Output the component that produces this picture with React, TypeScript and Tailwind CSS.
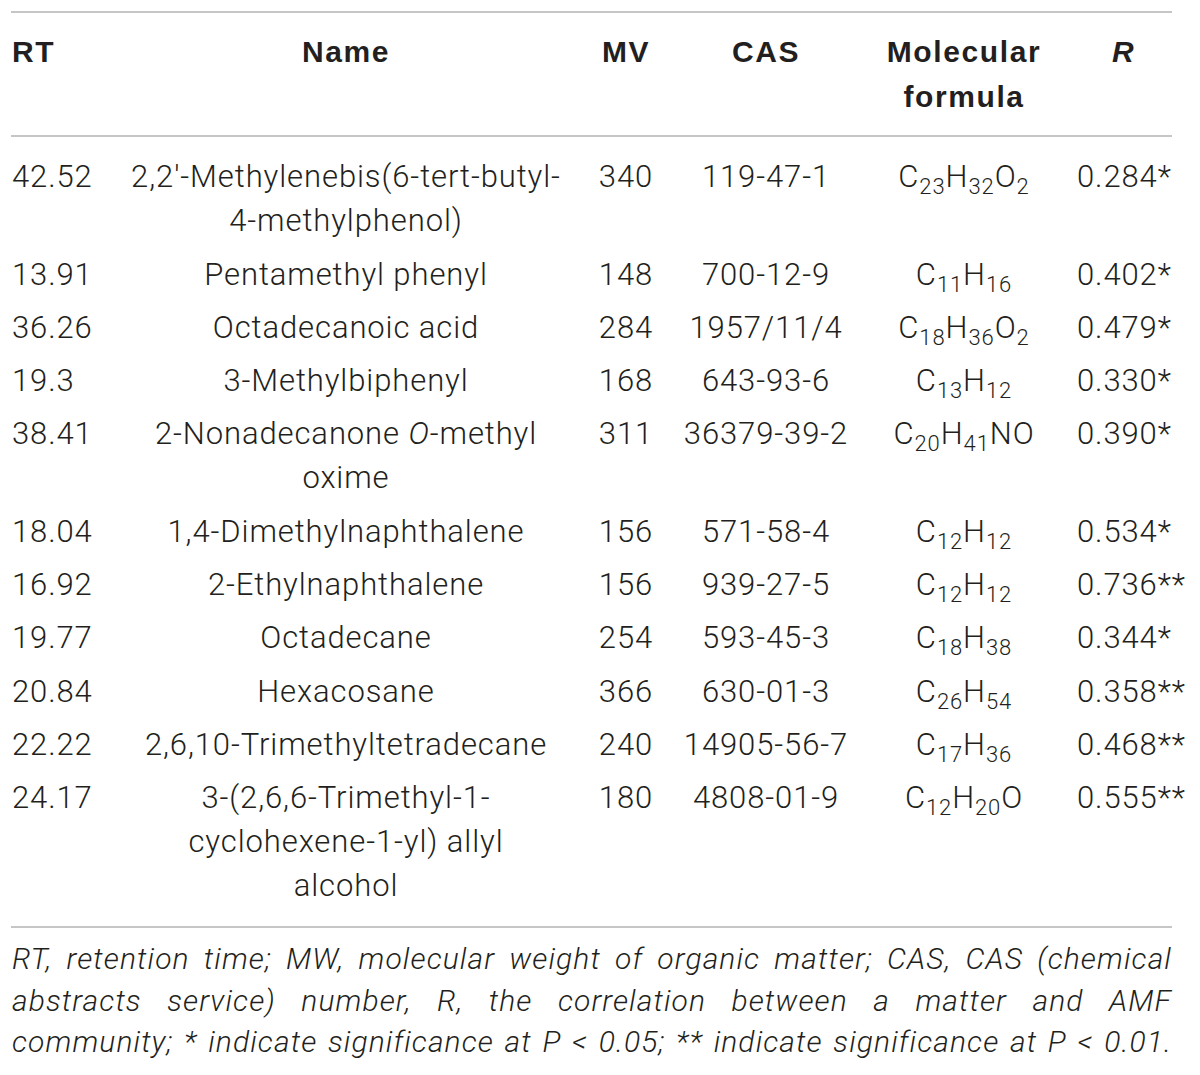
import React from "react";

type Row = {
  rt: string;
  name: React.ReactNode;
  mv: string;
  cas: string;
  formula: React.ReactNode;
  r: string;
};

const F = ({ parts }: { parts: [string, string?][] }) => (
  <span>
    {parts.map(([el, sub], i) => (
      <React.Fragment key={i}>
        {el}
        {sub && <sub className="text-[22px] relative top-[7px]">{sub}</sub>}
      </React.Fragment>
    ))}
  </span>
);

const ROWS: Row[] = [
  {
    rt: "42.52",
    name: (
      <>
        2,2′-Methylenebis(6-tert-butyl-
        <br />
        4-methylphenol)
      </>
    ),
    mv: "340",
    cas: "119-47-1",
    formula: <F parts={[["C", "23"], ["H", "32"], ["O", "2"]]} />,
    r: "0.284*",
  },
  { rt: "13.91", name: "Pentamethyl phenyl", mv: "148", cas: "700-12-9", formula: <F parts={[["C", "11"], ["H", "16"]]} />, r: "0.402*" },
  { rt: "36.26", name: "Octadecanoic acid", mv: "284", cas: "1957/11/4", formula: <F parts={[["C", "18"], ["H", "36"], ["O", "2"]]} />, r: "0.479*" },
  { rt: "19.3", name: "3-Methylbiphenyl", mv: "168", cas: "643-93-6", formula: <F parts={[["C", "13"], ["H", "12"]]} />, r: "0.330*" },
  {
    rt: "38.41",
    name: (
      <>
        2-Nonadecanone <i>O</i>-methyl
        <br />
        oxime
      </>
    ),
    mv: "311",
    cas: "36379-39-2",
    formula: <F parts={[["C", "20"], ["H", "41"], ["NO"]]} />,
    r: "0.390*",
  },
  { rt: "18.04", name: "1,4-Dimethylnaphthalene", mv: "156", cas: "571-58-4", formula: <F parts={[["C", "12"], ["H", "12"]]} />, r: "0.534*" },
  { rt: "16.92", name: "2-Ethylnaphthalene", mv: "156", cas: "939-27-5", formula: <F parts={[["C", "12"], ["H", "12"]]} />, r: "0.736**" },
  { rt: "19.77", name: "Octadecane", mv: "254", cas: "593-45-3", formula: <F parts={[["C", "18"], ["H", "38"]]} />, r: "0.344*" },
  { rt: "20.84", name: "Hexacosane", mv: "366", cas: "630-01-3", formula: <F parts={[["C", "26"], ["H", "54"]]} />, r: "0.358**" },
  { rt: "22.22", name: "2,6,10-Trimethyltetradecane", mv: "240", cas: "14905-56-7", formula: <F parts={[["C", "17"], ["H", "36"]]} />, r: "0.468**" },
  {
    rt: "24.17",
    name: (
      <>
        3-(2,6,6-Trimethyl-1-
        <br />
        cyclohexene-1-yl) allyl
        <br />
        alcohol
      </>
    ),
    mv: "180",
    cas: "4808-01-9",
    formula: <F parts={[["C", "12"], ["H", "20"], ["O"]]} />,
    r: "0.555**",
  },
];

const cols = "grid grid-cols-[110px_450px_110px_170px_226px_112px]";

export default function App() {
  return (
    <div className="w-[1200px] h-[1075px] bg-white px-[11px] pt-[11px] font-['Roboto','Liberation_Sans',sans-serif] text-[#231f20] text-[31px] font-light tracking-[0.9px]">
      <div className="w-[1161px]">
        <div className="border-t-2 border-b-2 border-[#c6c6c6]">
          <div className={`${cols} font-['Liberation_Sans',sans-serif] font-bold text-[30px] tracking-[1.6px] leading-[45px] pt-[16px] pb-[16px]`}>
            <div className="pl-[1px]">RT</div>
            <div className="text-center">Name</div>
            <div className="text-center">MV</div>
            <div className="text-center">CAS</div>
            <div className="text-center">
              Molecular
              <br />
              formula
            </div>
            <div className="pl-[35px] italic">R</div>
          </div>
        </div>
        <div className="pt-[9px] pb-[18px] border-b-2 border-[#c6c6c6] leading-[44px]">
          {ROWS.map((row, i) => (
            <div key={i} className={`${cols} pt-[9.3px] whitespace-nowrap`}>
              <div className="pl-[1px]">{row.rt}</div>
              <div className="text-center">{row.name}</div>
              <div className="text-center">{row.mv}</div>
              <div className="text-center">{row.cas}</div>
              <div className="text-center">{row.formula}</div>
              <div>{row.r}</div>
            </div>
          ))}
        </div>
        <div className="pt-[10px] italic leading-[41.5px] text-[30px] tracking-[1.1px] pl-[1px] whitespace-nowrap">
          <div className="[text-align-last:justify]">
            RT, retention time; MW, molecular weight of organic matter; CAS, CAS (chemical
          </div>
          <div className="[text-align-last:justify]">
            abstracts service) number, R, the correlation between a matter and AMF
          </div>
          <div className="[text-align-last:justify]">
            community; * indicate significance at P &lt; 0.05; ** indicate significance at P &lt; 0.01.
          </div>
        </div>
      </div>
    </div>
  );
}
